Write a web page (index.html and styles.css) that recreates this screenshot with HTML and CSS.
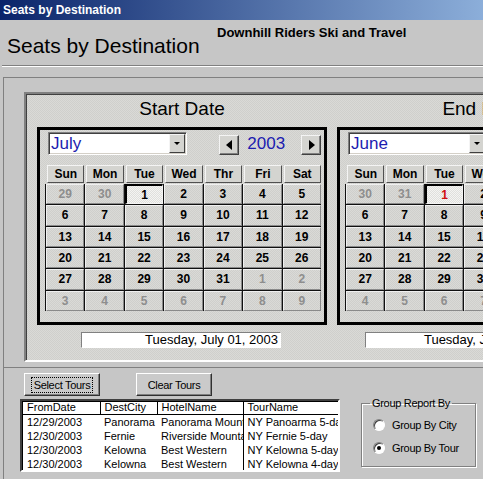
FILE: index.html
```html
<!DOCTYPE html>
<html lang="en">
<head>
  <meta charset="UTF-8">
  <meta name="viewport" content="width=device-width, initial-scale=1.0">
  <title>Seats by Destination</title>
  <link rel="stylesheet" href="styles.css">
</head>
<body>
  <div class="window">
    <div class="titlebar">Seats by Destination</div>

    <div class="form-header">
      <h1>Seats by Destination</h1>
      <div class="company">Downhill Riders Ski and Travel</div>
    </div>

    <div class="detail">
      <div class="date-panel">

        <!-- start date calendar -->
        <div class="cal-col">
          <h2>Start Date</h2>
          <div class="calendar">
            <div class="cal-nav">
              <div class="month-combo"><span class="month">July</span><span class="drop-btn"></span></div>
              <span class="nav-btn prev"></span>
              <span class="year">2003</span>
              <span class="nav-btn next"></span>
            </div>
            <div class="dow-row">
              <span class="dow">Sun</span><span class="dow">Mon</span><span class="dow">Tue</span><span class="dow">Wed</span><span class="dow">Thr</span><span class="dow">Fri</span><span class="dow">Sat</span>
            </div>
            <div class="days">
              <span class="day other">29</span><span class="day other">30</span><span class="day today">1</span><span class="day">2</span><span class="day">3</span><span class="day">4</span><span class="day">5</span>
              <span class="day">6</span><span class="day">7</span><span class="day">8</span><span class="day">9</span><span class="day">10</span><span class="day">11</span><span class="day">12</span>
              <span class="day">13</span><span class="day">14</span><span class="day">15</span><span class="day">16</span><span class="day">17</span><span class="day">18</span><span class="day">19</span>
              <span class="day">20</span><span class="day">21</span><span class="day">22</span><span class="day">23</span><span class="day">24</span><span class="day">25</span><span class="day">26</span>
              <span class="day">27</span><span class="day">28</span><span class="day">29</span><span class="day">30</span><span class="day">31</span><span class="day other">1</span><span class="day other">2</span>
              <span class="day other">3</span><span class="day other">4</span><span class="day other">5</span><span class="day other">6</span><span class="day other">7</span><span class="day other">8</span><span class="day other">9</span>
            </div>
          </div>
          <div class="date-box">Tuesday, July 01, 2003</div>
        </div>

        <!-- end date calendar -->
        <div class="cal-col">
          <h2>End Date</h2>
          <div class="calendar">
            <div class="cal-nav">
              <div class="month-combo"><span class="month">June</span><span class="drop-btn"></span></div>
              <span class="nav-btn prev"></span>
              <span class="year">2003</span>
              <span class="nav-btn next"></span>
            </div>
            <div class="dow-row">
              <span class="dow">Sun</span><span class="dow">Mon</span><span class="dow">Tue</span><span class="dow">Wed</span><span class="dow">Thr</span><span class="dow">Fri</span><span class="dow">Sat</span>
            </div>
            <div class="days">
              <span class="day other">30</span><span class="day other">31</span><span class="day today red">1</span><span class="day">2</span><span class="day">3</span><span class="day">4</span><span class="day">5</span>
              <span class="day">6</span><span class="day">7</span><span class="day">8</span><span class="day">9</span><span class="day">10</span><span class="day">11</span><span class="day">12</span>
              <span class="day">13</span><span class="day">14</span><span class="day">15</span><span class="day">16</span><span class="day">17</span><span class="day">18</span><span class="day">19</span>
              <span class="day">20</span><span class="day">21</span><span class="day">22</span><span class="day">23</span><span class="day">24</span><span class="day">25</span><span class="day">26</span>
              <span class="day">27</span><span class="day">28</span><span class="day">29</span><span class="day">30</span><span class="day other">1</span><span class="day other">2</span><span class="day other">3</span>
              <span class="day other">4</span><span class="day other">5</span><span class="day other">6</span><span class="day other">7</span><span class="day other">8</span><span class="day other">9</span><span class="day other">10</span>
            </div>
          </div>
          <div class="date-box end">Tuesday, June 01, 2003</div>
        </div>

      </div>
    </div>

    <div class="footer">
      <div class="buttons">
        <button class="btn focused"><span class="focus-rect">Select Tours</span></button>
        <button class="btn">Clear Tours</button>
      </div>

      <div class="footer-row">
        <div class="list-box">
          <table class="tour-list">
            <colgroup>
              <col style="width: 78px">
              <col style="width: 57px">
              <col style="width: 86px">
              <col style="width: 95px">
            </colgroup>
            <tr><th>FromDate</th><th>DestCity</th><th>HotelName</th><th>TourName</th></tr>
            <tr><td>12/29/2003</td><td>Panorama</td><td>Panorama Mountain</td><td>NY Panoarma 5-day</td></tr>
            <tr><td>12/30/2003</td><td>Fernie</td><td>Riverside Mountain</td><td>NY Fernie 5-day</td></tr>
            <tr><td>12/30/2003</td><td>Kelowna</td><td>Best Western</td><td>NY Kelowna 5-day</td></tr>
            <tr><td>12/30/2003</td><td>Kelowna</td><td>Best Western</td><td>NY Kelowna 4-day</td></tr>
          </table>
        </div>

        <fieldset class="group-box">
          <legend>Group Report By</legend>
          <label class="radio-row"><span class="radio"></span>Group By City</label>
          <label class="radio-row"><span class="radio checked"></span>Group By Tour</label>
        </fieldset>
      </div>
    </div>
  </div>
</body>
</html>
```

FILE: styles.css
```css
* {
  box-sizing: border-box;
}

body {
  margin: 0;
  background-color: #c6c6c6;
  font-family: "Liberation Sans", Arial, sans-serif;
  color: #000;
  overflow: hidden;
}

.window {
  width: 780px;
}

/* window caption */
.titlebar {
  height: 20px;
  padding-left: 3px;
  background: linear-gradient(to right, #0a246a, #a6caf0 580px);
  color: #fff;
  font-size: 12px;
  font-weight: bold;
  line-height: 20px;
}

/* form header */
.form-header {
  display: flex;
  align-items: flex-start;
  height: 46px;
  margin-left: 2px;
  border-bottom: 1px solid #808080;
  box-shadow: 0 1px 0 #fff;
}

.form-header h1 {
  width: 210px;
  margin: 14px 0 0 5px;
  font-size: 21px;
  font-weight: normal;
  line-height: 24px;
}

.company {
  margin-top: 5px;
  font-size: 13px;
  font-weight: bold;
  line-height: 16px;
}

/* detail section with the two calendars */
.detail {
  height: 290px;
  margin: 11px 0 0 3px;
  padding: 14px 0 0 20px;
  border-top: 1px solid #808080;
  border-left: 1px solid #808080;
}

/* dithered face used by the calendar control */
.date-panel,
.day {
  background: repeating-conic-gradient(#dadad7 0 25%, #cfcfcc 0 50%) 0 0 / 2px 2px;
}

.date-panel {
  display: flex;
  gap: 10px;
  width: 680px;
  height: 270px;
  padding: 4px 0 0 11px;
  border: 2px solid;
  border-color: #808080 #fff #fff #808080;
  box-shadow: inset 1px 1px 0 #404040;
}

.cal-col {
  flex: none;
  width: 290px;
}

.cal-col h2 {
  margin: 0;
  font-size: 19px;
  font-weight: normal;
  line-height: 22px;
  text-align: center;
}

.calendar {
  height: 198px;
  margin-top: 7px;
  padding: 2px 3px 0 5px;
  border: 3px solid #000;
}

.cal-nav {
  display: flex;
  align-items: flex-end;
  height: 23px;
}

.month-combo {
  display: flex;
  align-items: center;
  width: 140px;
  height: 23px;
  margin-left: 3px;
  background: #fff;
  border: 1px solid;
  border-color: #808080 #fff #fff #808080;
  box-shadow: inset 1px 1px 0 #404040, inset -1px -1px 0 #d4d0c8;
}

.month {
  padding-left: 2px;
  color: #1c1cb0;
  font-size: 17px;
}

.drop-btn {
  display: flex;
  align-items: center;
  justify-content: center;
  width: 16px;
  height: 19px;
  margin-left: auto;
  margin-right: 1px;
  background: #d4d4d0;
  border: 1px solid;
  border-color: #f4f4f4 #404040 #404040 #f4f4f4;
}

.drop-btn::after {
  content: "";
  border-top: 3px solid #000;
  border-left: 3px solid transparent;
  border-right: 3px solid transparent;
}

.nav-btn {
  display: flex;
  align-items: center;
  justify-content: center;
  width: 20px;
  height: 20px;
  margin-left: 32px;
  background: #d4d4d0;
  border: 1px solid;
  border-color: #f4f4f4 #404040 #404040 #f4f4f4;
  box-shadow: inset -1px -1px 0 #808080;
}

.nav-btn::after {
  content: "";
  border-top: 5px solid transparent;
  border-bottom: 5px solid transparent;
}

.nav-btn.prev::after {
  border-right: 6px solid #000;
}

.nav-btn.next {
  margin-left: 0;
}

.nav-btn.next::after {
  border-left: 6px solid #000;
  margin-left: 2px;
}

.year {
  width: 54px;
  margin-left: 8px;
  color: #1c1cb0;
  font-size: 17px;
  line-height: 23px;
}

.dow-row,
.days {
  display: grid;
  grid-template-columns: repeat(7, 1fr);
  width: 276px;
}

.dow-row {
  height: 18px;
  margin-top: 10px;
}

.dow {
  margin-left: 2px;
  background: #d4d4d0;
  border: 1px solid;
  border-color: #f4f4f4 #505050 #505050 #f4f4f4;
  font-size: 12px;
  font-weight: bold;
  line-height: 16px;
  text-align: center;
}

.days {
  grid-template-rows: repeat(6, 1fr);
  gap: 1px;
  height: 127px;
  margin-top: 1px;
  border-left: 1px solid #111;
  background: #111;
}

.day {
  display: flex;
  align-items: center;
  justify-content: center;
  border: 1px solid;
  border-color: #f0f0f0 #8a8a8a #8a8a8a #f0f0f0;
  font-size: 12px;
  font-weight: bold;
}

.day.other {
  color: #8e8e8e;
}

.day.today {
  background: repeating-conic-gradient(#f4f4f2 0 25%, #e0e0dd 0 50%) 0 0 / 2px 2px;
  border-width: 2px 1px 1px 2px;
  border-color: #000 #f4f4f4 #f4f4f4 #000;
}

.day.red {
  color: #d01010;
}

.date-box {
  width: 200px;
  height: 16px;
  margin: 7px 0 0 44px;
  padding-right: 2px;
  background: #fff;
  border: 1px solid;
  border-color: #808080 #fff #fff #808080;
  font-size: 13px;
  line-height: 14px;
  text-align: right;
}

.date-box.end {
  margin-left: 28px;
}

/* footer with tour list */
.footer {
  height: 120px;
  margin-left: 3px;
  padding: 5px 0 0 20px;
  border-top: 1px solid #808080;
  border-left: 1px solid #808080;
}

.buttons {
  display: flex;
  gap: 36px;
}

.btn {
  display: flex;
  align-items: center;
  justify-content: center;
  width: 76px;
  height: 23px;
  padding: 0;
  background: #cacaca;
  border: 1px solid;
  border-color: #fff #303030 #303030 #fff;
  box-shadow: inset -1px -1px 0 #808080;
  font-family: "Liberation Sans", Arial, sans-serif;
  font-size: 11px;
  letter-spacing: -0.3px;
  color: #000;
}

.focus-rect {
  padding: 1px 2px;
  border: 1px dotted #000;
}

.footer-row {
  display: flex;
  align-items: flex-start;
  margin: 3px 0 0 -4px;
}

.list-box {
  width: 320px;
  height: 73px;
  overflow: hidden;
  background: #fff;
  border: 2px solid;
  border-color: #404040 #fff #fff #404040;
  box-shadow: inset 1px 1px 0 #000;
}

.tour-list {
  width: 316px;
  table-layout: fixed;
  border-collapse: collapse;
  font-size: 11px;
}

.tour-list th,
.tour-list td {
  padding: 0 0 0 4px;
  overflow: hidden;
  white-space: nowrap;
  text-align: left;
  font-weight: normal;
}

.tour-list th {
  height: 13px;
  line-height: 12px;
  border-right: 1px solid #000;
  border-bottom: 1px solid #000;
}

.tour-list th:first-child,
.tour-list td:first-child {
  padding-left: 5px;
}

.tour-list td {
  height: 14px;
  line-height: 14px;
}

.tour-list td:nth-child(4) {
  border-left: 1px solid #000;
}

.group-box {
  width: 115px;
  height: 71px;
  margin: -3px 0 0 21px;
  padding: 0;
  border: 1px solid #808080;
  box-shadow: inset 1px 1px 0 #fff, 1px 1px 0 #fff;
  font-size: 11px;
  letter-spacing: -0.3px;
}

.group-box legend {
  margin-left: 8px;
  padding: 0 2px;
  line-height: 14px;
}

.radio-row {
  display: flex;
  align-items: center;
  height: 23px;
  padding-left: 11px;
}

.radio-row:first-of-type {
  margin-top: 3px;
}

.radio {
  position: relative;
  width: 12px;
  height: 12px;
  margin-right: 7px;
  border-radius: 50%;
  background: #fff;
  border: 1px solid;
  border-color: #808080 #fff #fff #808080;
  box-shadow: inset 1px 1px 0 #404040;
}

.radio.checked::after {
  content: "";
  position: absolute;
  left: 3px;
  top: 3px;
  width: 4px;
  height: 4px;
  border-radius: 50%;
  background: #000;
}
```
